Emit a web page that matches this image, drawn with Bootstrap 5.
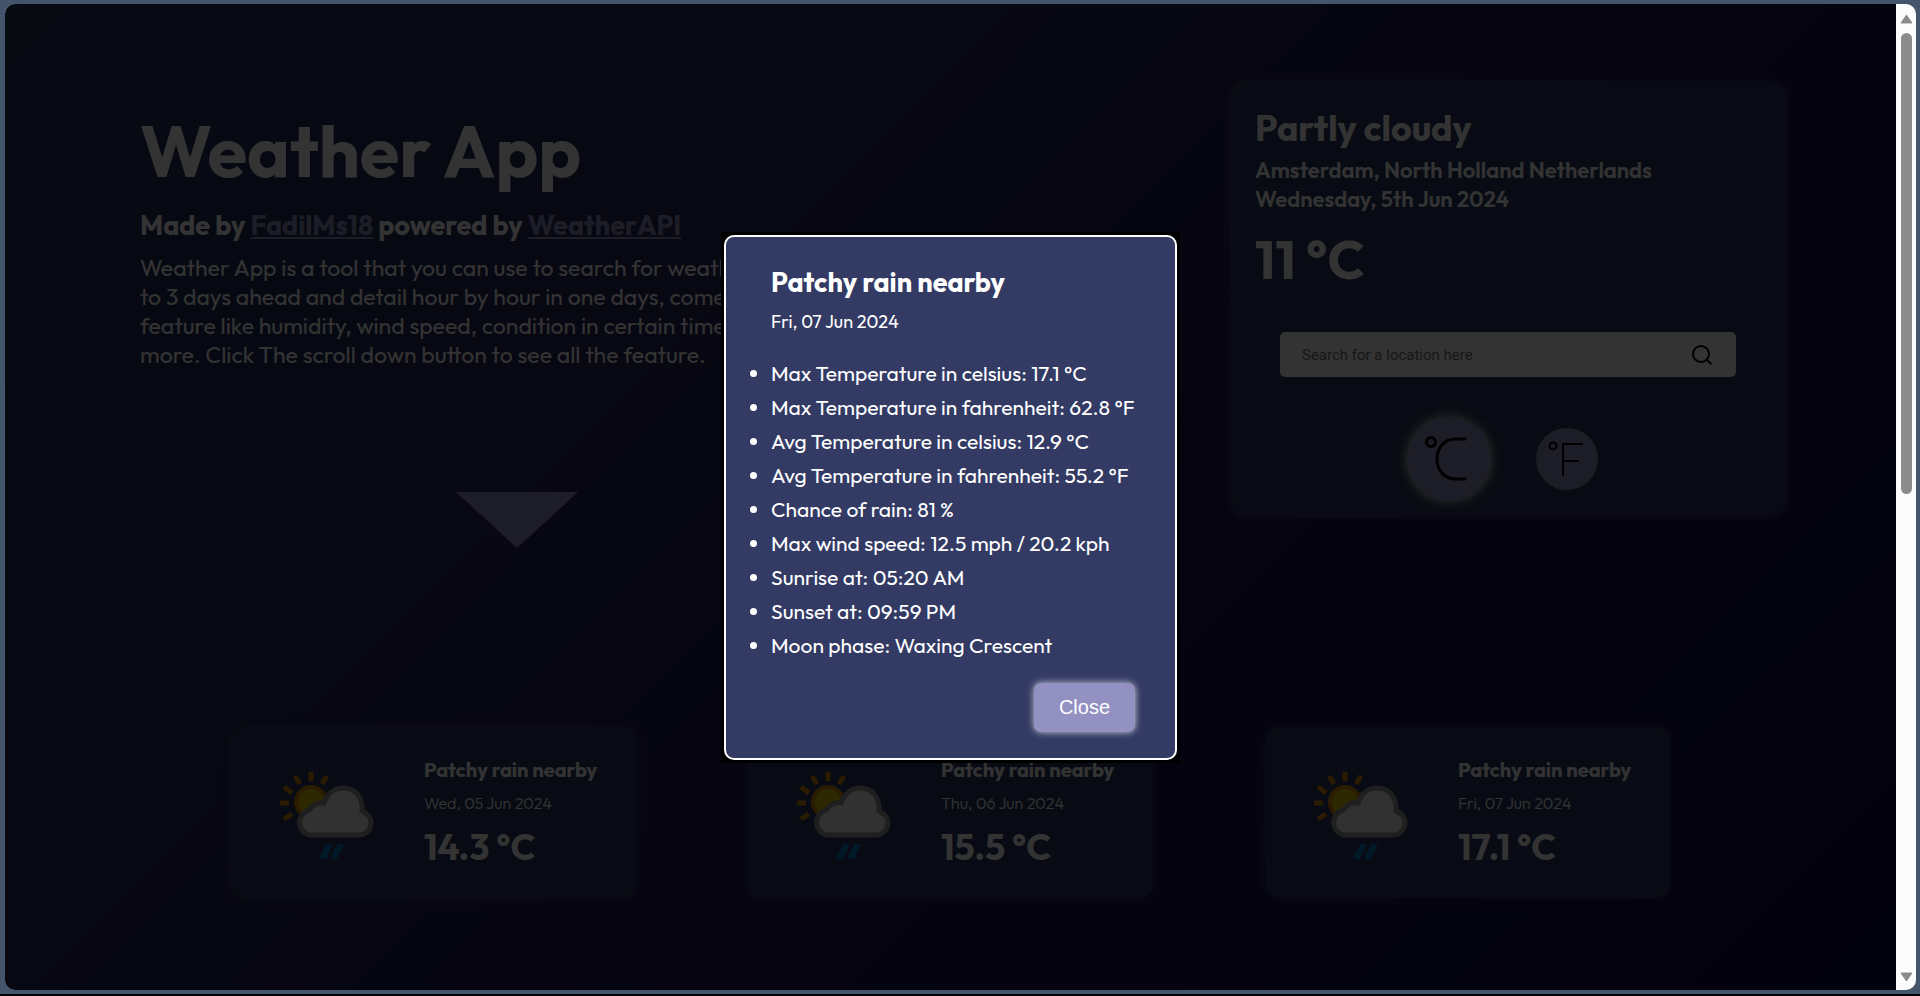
<!DOCTYPE html>
<html lang="en">
<head>
<meta charset="utf-8">
<meta name="viewport" content="width=device-width, initial-scale=1">
<title>Weather App</title>
<link href="https://cdn.jsdelivr.net/npm/bootstrap@5.3.0/dist/css/bootstrap.min.css" rel="stylesheet">
<style>
  :root { --ink: #fff; --accent: #9390c2; --panel: #2b3a5e; }
  body { background: #44546a; border-bottom: 2px solid #000; font-family: Outfit, Lato, sans-serif; color: var(--ink); }
  .window-frame { padding: 4px 4px 4px 5px; }
  .app-window { border-radius: 10px; background: #fcfcfc; }
  .page-area { background: linear-gradient(135deg, #23375c 0%, #28285a 35%, #18124f 65%, #0d0746 100%); }
  .hero { padding: 79px 111px 0 135px; }
  .intro { width: 754px; padding-top: 24px; }
  .intro h1 { font-size: 72px; line-height: 88px; font-weight: 700; margin: 0 0 13px; }
  .intro h2 { font-size: 27px; line-height: 34px; font-weight: 700; margin: 0 0 11px; }
  .intro h2 a { color: var(--accent); }
  .intro p { font-size: 23px; line-height: 29px; margin: 0; }
  .scroll-down { margin-top: 123px; line-height: 0; }
  .now-panel { width: 553px; height: 432px; background: var(--panel); border-radius: 14px; box-shadow: 0 0 6px rgba(170,165,200,.5); padding: 22px 23px 0; }
  .now-panel h2 { font-size: 36px; line-height: 46px; font-weight: 700; margin: 0 0 5px; }
  .now-panel h3 { font-size: 22px; line-height: 29px; font-weight: 600; margin: 0; }
  .now-temp { font-size: 54px; line-height: 68px; font-weight: 700; margin: 11px 0 39px; }
  .search-box { background: #fff; border-radius: 5px; height: 45px; margin: 0 26px 0 25px; padding: 0 24px 0 22px; }
  .search-box input { border: 0; background: none; outline: 0; font: 15px Roboto, sans-serif; color: #222; }
  .search-box input::placeholder { color: #757575; opacity: 1; }
  .icon-button { border: 0; background: none; padding: 0; line-height: 0; color: #000; }
  .units { gap: 45px; margin-top: 40px; padding-right: 12px; }
  .unit { width: 62px; height: 62px; border-radius: 50%; border: 0; padding: 0; background: var(--accent); line-height: 0; }
  .unit.current { width: 84px; height: 84px; box-shadow: 0 0 10px 1px rgba(255,255,220,.75); }
  .unit svg { width: 100%; height: 100%; }
  .forecast { margin: 179px 170px 0; }
  .day-panel { width: 405px; height: 171px; background: var(--panel); border-radius: 14px; box-shadow: 0 0 8px rgba(147,144,194,.25); padding: 28px 0 0 49px; gap: 48px; }
  .day-panel h3 { font-size: 20px; line-height: 30px; font-weight: 700; margin: 0; }
  .day-panel p { font-size: 16px; line-height: 24px; font-weight: 300; margin: 6px 0 9px; }
  .day-panel strong { font-size: 36px; line-height: 46px; display: block; }
  .shade { position: absolute; inset: 0; background: rgba(0,0,0,.8); }
  .modal { position: absolute; }
  .modal-dialog { width: 459px; max-width: 100%; margin: 0 auto; height: 100%; min-height: 0; }
  .dialog-edge { border: 3px solid #000; background: #000; width: 100%; }
  .modal-content { border: 2px solid #fff; border-radius: 10px; background: #333b64; color: #fff; padding: 27px 40px 26px 45px; }
  .modal-content h2 { font-size: 27px; line-height: 36px; font-weight: 700; margin: 0 0 10px; }
  .modal-content p { font-size: 18px; line-height: 24px; margin: 0 0 22px; }
  .modal-content ul { font-size: 21px; line-height: 34px; margin: 0 0 21px; padding: 0; white-space: nowrap; }
  .close-button { background: var(--accent); color: #fff; border: 0; border-radius: 7px; width: 101px; height: 49px; font: 20px "Liberation Sans", sans-serif; box-shadow: 0 0 7px rgba(255,255,255,.75); }
  .scroll-rail { width: 20px; padding: 10px 0 8px; gap: 9px; line-height: 0; }
  .scroll-thumb { width: 11px; height: calc(47% + 6px); border-radius: 6px; background: #8b8b8b; }
</style>
</head>
<body class="vh-100 overflow-hidden">
<div class="window-frame h-100">
<div class="app-window h-100 d-flex overflow-hidden">
  <div class="page-area position-relative flex-grow-1 overflow-hidden">
    <main>
      <section class="hero d-flex justify-content-between align-items-start">
        <div class="intro">
          <h1>Weather App</h1>
          <h2>Made by <a href="#">FadilMs18</a> powered by <a href="#">WeatherAPI</a></h2>
          <p class="text-nowrap">Weather App is a tool that you can use to search for weather up<br>to 3 days ahead and detail hour by hour in one days, come with<br>feature like humidity, wind speed, condition in certain time and<br>more. Click The scroll down button to see all the feature.</p>
          <div class="scroll-down text-center">
            <button class="icon-button" type="button" aria-label="Scroll down"><svg width="122" height="56"><path fill="#9390c2" d="M0 0h122L61 56z"/></svg></button>
          </div>
        </div>
        <div class="now-panel">
          <h2>Partly cloudy</h2>
          <h3>Amsterdam, North Holland Netherlands</h3>
          <h3>Wednesday, 5th Jun 2024</h3>
          <div class="now-temp">11 °C</div>
          <form class="search-box d-flex align-items-center">
            <input class="flex-grow-1 p-0" type="text" aria-label="Location" placeholder="Search for a location here">
            <button class="icon-button" type="button" aria-label="Search"><svg width="20" height="20" fill="none" stroke="#000" stroke-width="2"><circle cx="9" cy="9" r="8"/><path d="M14.5 14.5L19.3 19.3"/></svg></button>
          </form>
          <div class="units d-flex justify-content-center align-items-center">
            <button class="unit current" type="button" aria-label="Celsius"><svg viewBox="0 0 84 84" fill="none" stroke="#000" stroke-width="3" stroke-linecap="round"><circle cx="24" cy="25" r="4.500"/><path d="M58 22H49C37 22 30 31 30 42s7 20 19 20h9"/></svg></button>
            <button class="unit" type="button" aria-label="Fahrenheit"><svg viewBox="0 0 62 62" fill="none" stroke="#000" stroke-width="2" stroke-linecap="round"><circle cx="17" cy="18" r="3.500"/><path d="M46 16H27v31M27 33h15"/></svg></button>
          </div>
        </div>
      </section>
      <section class="forecast d-flex justify-content-around">
        <article class="day-panel d-flex">
          <svg class="mt-3" width="96" height="92" aria-hidden="true"><use href="#rain-icon"/></svg>
          <div><h3>Patchy rain nearby</h3><p>Wed, 05 Jun 2024</p><strong>14.3 °C</strong></div>
        </article>
        <article class="day-panel d-flex">
          <svg class="mt-3" width="96" height="92" aria-hidden="true"><use href="#rain-icon"/></svg>
          <div><h3>Patchy rain nearby</h3><p>Thu, 06 Jun 2024</p><strong>15.5 °C</strong></div>
        </article>
        <article class="day-panel d-flex">
          <svg class="mt-3" width="96" height="92" aria-hidden="true"><use href="#rain-icon"/></svg>
          <div><h3>Patchy rain nearby</h3><p>Fri, 07 Jun 2024</p><strong>17.1 °C</strong></div>
        </article>
      </section>
    </main>
    <div class="shade"></div>
    <div class="modal d-block" role="dialog" aria-labelledby="dialog-title">
      <div class="modal-dialog modal-dialog-centered">
        <div class="dialog-edge pe-auto">
          <div class="modal-content">
            <h2 id="dialog-title">Patchy rain nearby</h2>
            <p>Fri, 07 Jun 2024</p>
            <ul>
              <li>Max Temperature in celsius: 17.1 °C</li>
              <li>Max Temperature in fahrenheit: 62.8 °F</li>
              <li>Avg Temperature in celsius: 12.9 °C</li>
              <li>Avg Temperature in fahrenheit: 55.2 °F</li>
              <li>Chance of rain: 81 %</li>
              <li>Max wind speed: 12.5 mph / 20.2 kph</li>
              <li>Sunrise at: 05:20 AM</li>
              <li>Sunset at: 09:59 PM</li>
              <li>Moon phase: Waxing Crescent</li>
            </ul>
            <button class="close-button align-self-end" type="button">Close</button>
          </div>
        </div>
      </div>
    </div>
  </div>
  <div class="scroll-rail d-flex flex-column align-items-center flex-shrink-0">
    <svg width="13" height="10"><path d="M6.500 1L12 9H1z" fill="#8b8b8b" stroke="#8b8b8b" stroke-linejoin="round"/></svg>
    <div class="scroll-thumb"></div>
    <svg class="mt-auto" width="13" height="10"><path d="M6.500 9L12 1H1z" fill="#8b8b8b" stroke="#8b8b8b" stroke-linejoin="round"/></svg>
  </div>
</div>
</div>
<svg width="0" height="0" class="position-absolute" aria-hidden="true">
  <defs>
    <g id="rain-icon">
      <g stroke="#d88700" stroke-width="5"><path d="M31 1v9M15 5l5 8M47 5l-5 8M4 16l8 6M0 32h9M4 48l8-5"/></g>
      <circle cx="31" cy="31" r="15" fill="#e0c800" stroke="#d88700" stroke-width="4"/>
      <path d="M29 64a13 13 0 0 1 0-25C33 33 39 31 44 32C48 21 56 17 63 17C75 17 83 26 82 40C88 43 91 47 91 52A12 12 0 0 1 79 64Z" fill="#f3f3f3" stroke="#999" stroke-width="5"/>
      <path d="M46 73h7l-7 15h-7zM57 73h7l-7 15h-7z" fill="#0078c4"/>
    </g>
  </defs>
</svg>
<script src="https://cdn.jsdelivr.net/npm/bootstrap@5.3.0/dist/js/bootstrap.bundle.min.js"></script>
</body>
</html>
